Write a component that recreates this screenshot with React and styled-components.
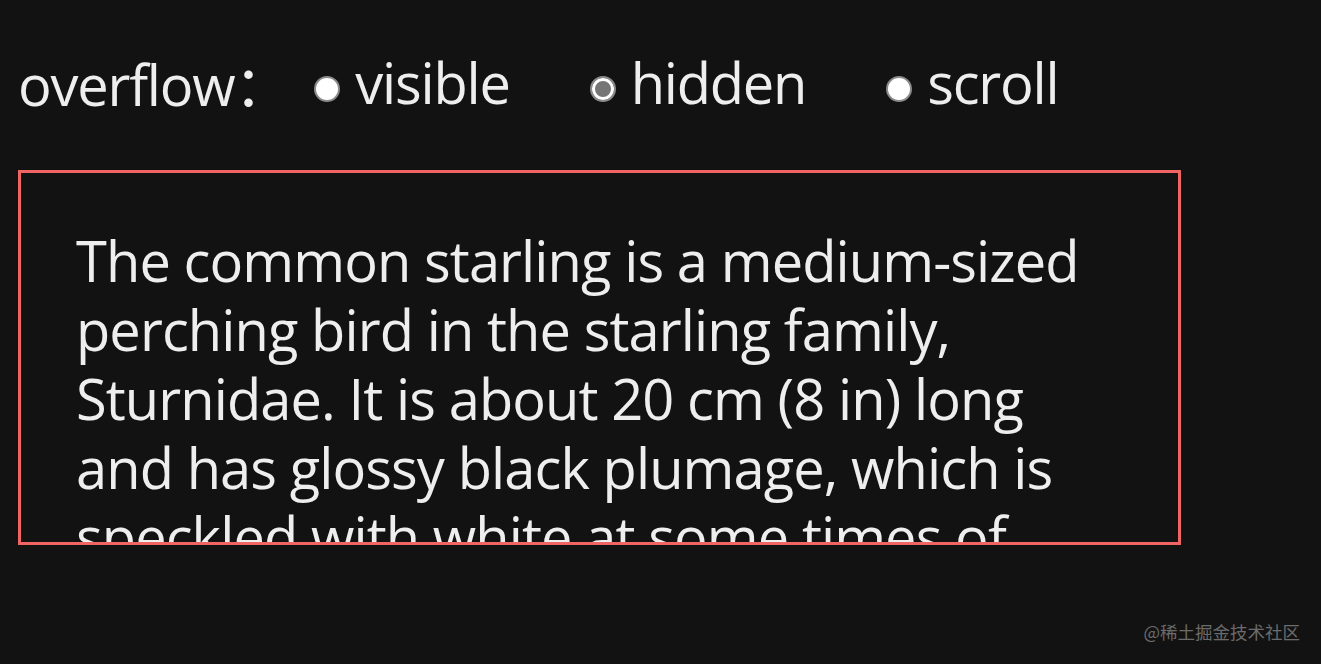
import React, { useState } from "react";
import styled, { createGlobalStyle } from "styled-components";

const GlobalStyle = createGlobalStyle`
  html, body {
    margin: 0;
    padding: 0;
    background: #121212;
  }
  body {
    font-family: "Open Sans", "Noto Sans", sans-serif;
    color: #eeeeee;
  }
`;

const Page = styled.div`
  position: relative;
  width: 1321px;
  height: 664px;
  padding: 48px 0 0 18px;
  box-sizing: border-box;
  overflow: hidden;
`;

/* Radio row at the top */
const Controls = styled.div`
  display: flex;
  align-items: center;
  height: 69px;
  font-size: 56px;
  line-height: 69px;
  letter-spacing: -1.2px;
`;

const Title = styled.span`
  margin-right: 25px;
`;

const Colon = styled.span`
  margin-left: 0;
  font-family: "Noto Sans CJK SC", sans-serif;
`;

const Option = styled.label`
  display: flex;
  align-items: center;
  gap: 15px;
  margin-right: 80px;
  cursor: pointer;
`;

const Radio = styled.input.attrs({ type: "radio" })`
  appearance: none;
  margin: 12px 0 0;
  width: 26px;
  height: 26px;
  border-radius: 50%;
  border: 2px solid #8a8a8a;
  background: #ffffff;
  box-sizing: border-box;
  cursor: pointer;

  &:checked {
    background: #767676;
    box-shadow: inset 0 0 0 3px #ffffff;
  }
`;

/* The clipped text box */
const Box = styled.div`
  margin-top: 53px;
  width: 1163px;
  height: 375px;
  box-sizing: border-box;
  border: 3px solid #f06464;
  padding: 53px 55px;
  overflow: ${(p) => p.$overflow};
  font-size: 56px;
  line-height: 69px;
  letter-spacing: -0.9px;
`;

const Watermark = styled.div`
  position: absolute;
  right: 21px;
  bottom: 20px;
  font-family: "Noto Sans CJK SC", sans-serif;
  font-size: 17.5px;
  color: #6b6b6b;
`;

const options = ["visible", "hidden", "scroll"];

const App = () => {
  const [overflow, setOverflow] = useState("hidden");

  return (
    <Page>
      <GlobalStyle />
      <Controls>
        <Title>
          overflow<Colon>：</Colon>
        </Title>
        {options.map((o) => (
          <Option key={o}>
            <Radio
              name="overflow"
              value={o}
              checked={overflow === o}
              onChange={() => setOverflow(o)}
            />
            {o}
          </Option>
        ))}
      </Controls>
      <Box $overflow={overflow}>
        The common starling is a medium-sized perching bird in the starling
        family, Sturnidae. It is about 20 cm (8 in) long and has glossy black
        plumage, which is speckled with white at some times of year.
      </Box>
      <Watermark>@稀土掘金技术社区</Watermark>
    </Page>
  );
};

export default App;
